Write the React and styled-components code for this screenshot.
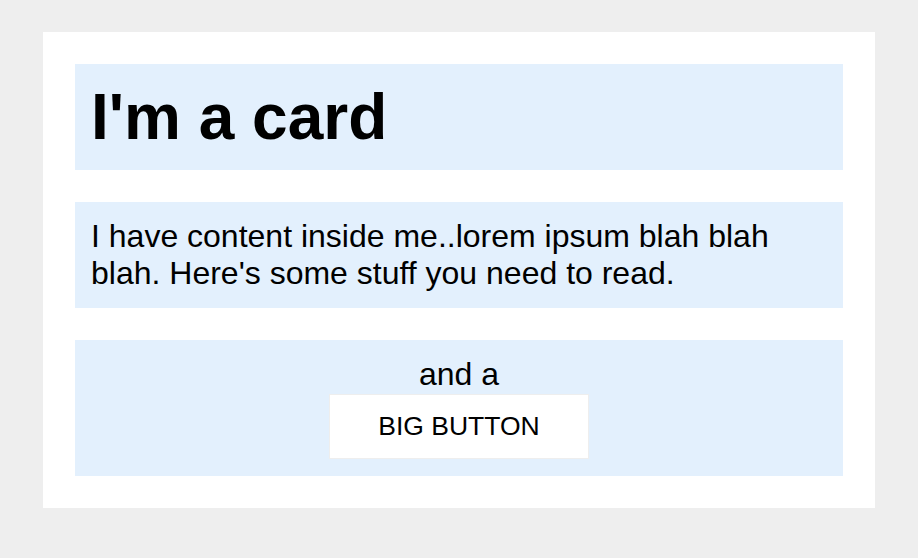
import React from "react";
import styled, { createGlobalStyle } from "styled-components";

const GlobalStyle = createGlobalStyle`
  html, body {
    margin: 0;
    padding: 0;
    background: #eeeeee;
    font-family: "Liberation Sans", Arial, Helvetica, sans-serif;
    color: #000;
  }
  * { box-sizing: border-box; }
`;

const Page = styled.div`
  padding: 32px 43px;
`;

const Card = styled.div`
  background: #ffffff;
  padding: 32px;
  display: flex;
  flex-direction: column;
  gap: 32px;
`;

const Section = styled.div`
  background: #e3f0fd;
  padding: ${(p) => p.$pad || "16px"};
  font-size: 32px;
  line-height: normal;
  text-align: ${(p) => (p.$center ? "center" : "left")};
`;

const Heading = styled.h1`
  margin: 0;
  font-size: 64px;
  font-weight: bold;
  line-height: normal;
`;

const Text = styled.p`
  margin: 0;
`;

const FooterLine = styled.div``;

const BigButton = styled.button`
  display: block;
  margin: 1px auto 0;
  font-family: "Liberation Sans", Arial, Helvetica, sans-serif;
  font-size: 26.5px;
  line-height: normal;
  color: #000;
  background: #ffffff;
  border: 1px solid #eeeeee;
  padding: 16px 48px;
  cursor: pointer;
`;

export default function App() {
  return (
    <>
      <GlobalStyle />
      <Page>
        <Card>
          <Section>
            <Heading>I'm a card</Heading>
          </Section>
          <Section>
            <Text>
              I have content inside me..lorem ipsum blah blah blah. Here's some
              stuff you need to read.
            </Text>
          </Section>
          <Section $center $pad="16px 16px 17px">
            <FooterLine>and a</FooterLine>
            <BigButton>BIG BUTTON</BigButton>
          </Section>
        </Card>
      </Page>
    </>
  );
}
